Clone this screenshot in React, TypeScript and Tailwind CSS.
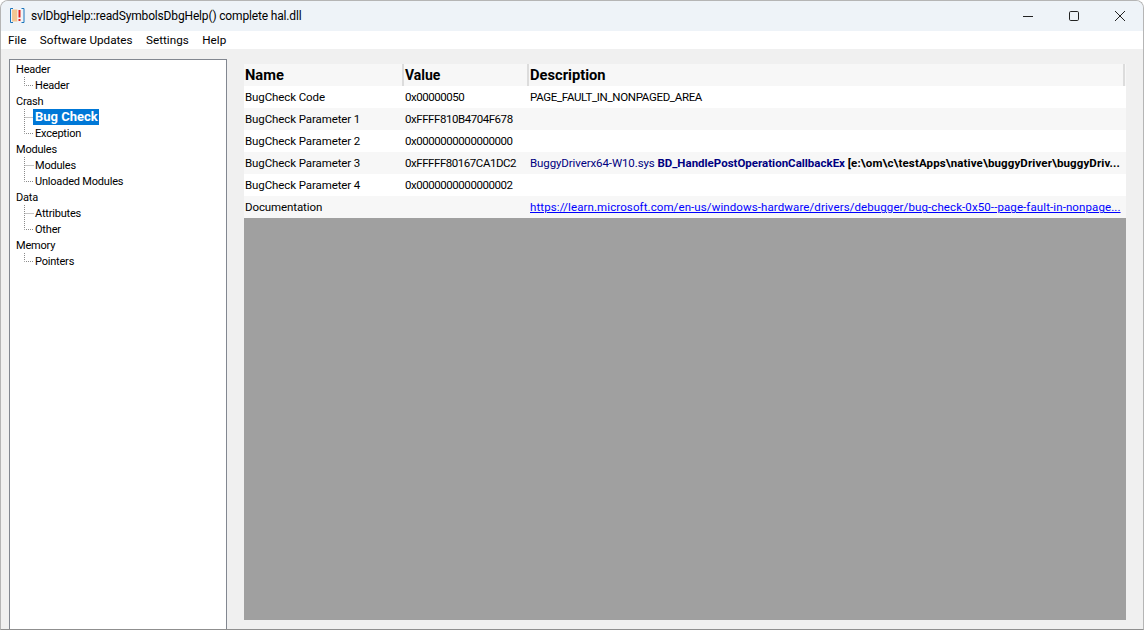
import { ReactNode } from 'react'

const tree = [
  { label: 'Header', children: ['Header'] },
  { label: 'Crash', children: ['Bug Check', 'Exception'] },
  { label: 'Modules', children: ['Modules', 'Unloaded Modules'] },
  { label: 'Data', children: ['Attributes', 'Other'] },
  { label: 'Memory', children: ['Pointers'] },
]

const rows: { name: string; value: string; desc?: ReactNode }[] = [
  { name: 'BugCheck Code', value: '0x00000050', desc: <span className="tracking-[-0.33px]">PAGE_FAULT_IN_NONPAGED_AREA</span> },
  { name: 'BugCheck Parameter 1', value: '0xFFFF810B4704F678' },
  { name: 'BugCheck Parameter 2', value: '0x0000000000000000' },
  {
    name: 'BugCheck Parameter 3',
    value: '0xFFFFF80167CA1DC2',
    desc: (
      <>
        <span className="text-[#000080] tracking-[-0.1px]">BuggyDriverx64-W10.sys </span>
        <b className="text-[#000080]">BD_HandlePostOperationCallbackEx </b>
        <b className="tracking-[0.12px]">[e:\om\c\testApps\native\buggyDriver\buggyDriv...</b>
      </>
    ),
  },
  { name: 'BugCheck Parameter 4', value: '0x0000000000000002' },
  {
    name: 'Documentation',
    value: '',
    desc: (
      <span className="text-[#0000ff] underline tracking-[0.1px]">
        https://learn.microsoft.com/en-us/windows-hardware/drivers/debugger/bug-check-0x50--page-fault-in-nonpage...
      </span>
    ),
  },
]

function AppIcon() {
  return (
    <svg width="18" height="18" viewBox="0 0 18 18" className="shrink-0">
      <path d="M2.5 1.5V15.5M2.5 1.5H5M2.5 15.5H5" stroke="#1b75bc" strokeWidth="1" fill="none" />
      <rect x="4" y="2.5" width="5.5" height="12" fill="#f2c592" />
      <rect x="9.5" y="2.5" width="4.5" height="12" fill="#f4f4f4" />
      <rect x="10.5" y="3" width="2" height="7.5" fill="#e02020" />
      <rect x="10.5" y="12" width="2" height="2" fill="#e02020" />
      <path d="M16 1.5V15.5M13.5 1.5H16M13.5 15.5H16" stroke="#1b75bc" strokeWidth="1" fill="none" />
    </svg>
  )
}

function Connector({ last }: { last: boolean }) {
  return (
    <svg width="10" height="16" viewBox="0 0 10 16" className="shrink-0">
      <path
        d={last ? 'M.5 0V8.5H10' : 'M.5 0V16M.5 8.5H10'}
        stroke="#8a8a8a"
        strokeWidth="1"
        strokeDasharray="1 1"
        fill="none"
      />
    </svg>
  )
}

export default function App() {
  return (
    <div className="w-[1144px] h-[630px] flex flex-col overflow-hidden rounded-t-lg border border-b-[#8f8f8f] border-x-[#b5b5b5] border-t-[#b5b5b5] bg-[#f0f0f0] text-[11.5px] text-black font-['Roboto','Noto_Sans',sans-serif]">
      {/* title bar */}
      <div className="h-[30px] shrink-0 flex items-center bg-[#eef3f8] pl-[7px]">
        <AppIcon />
        <span className="ml-[5px] text-[12px] tracking-[-0.16px]">svlDbgHelp::readSymbolsDbgHelp() complete hal.dll</span>
        <div className="ml-auto flex items-center text-[#222]">
          <div className="w-[46px] h-[30px] flex items-center justify-center">
            <svg width="12" height="12" viewBox="0 0 12 12"><path d="M1 6.5H11" stroke="#222" fill="none" /></svg>
          </div>
          <div className="w-[46px] h-[30px] flex items-center justify-center">
            <svg width="12" height="12" viewBox="0 0 12 12"><rect x="1.5" y="1.5" width="9" height="9" rx="1.2" stroke="#222" fill="none" /></svg>
          </div>
          <div className="w-[46px] h-[30px] flex items-center justify-center">
            <svg width="12" height="12" viewBox="0 0 12 12"><path d="M1 1L11 11M11 1L1 11" stroke="#222" fill="none" /></svg>
          </div>
        </div>
      </div>

      {/* menu */}
      <div className="h-[18px] shrink-0 flex items-center bg-white pl-[7px] pt-[2px] gap-[13.5px] text-[11.7px]">
        <span>File</span>
        <span>Software Updates</span>
        <span>Settings</span>
        <span>Help</span>
      </div>

      {/* body */}
      <div className="flex-1 min-h-0 flex pt-[10px] pl-[8px]">
        <div className="w-[218px] border border-[#828790] border-b-0 bg-white pt-[1px] pl-[6px] leading-[18px] text-[11px] tracking-[-0.2px]">
          {tree.map(group => (
            <div key={group.label}>
              <div className="h-4">{group.label}</div>
              {group.children.map((child, i) => (
                <div key={child} className="h-4 flex pl-[8px]">
                  <Connector last={i === group.children.length - 1} />
                  {child === 'Bug Check' ? (
                    <span className="h-4 leading-4 bg-[#0078d7] text-white font-bold pl-[2px] pr-[1px] -ml-[1px] text-[13px] tracking-normal">{child}</span>
                  ) : (
                    <span className="pl-[1px]">{child}</span>
                  )}
                </div>
              ))}
            </div>
          ))}
        </div>

        <div className="flex-1 min-w-0 flex flex-col pt-[5px] pl-[17px] pr-[17px] pb-[9px]">
          <div className="h-[22px] shrink-0 flex items-center bg-[#f7f7f7] font-bold text-[14.7px]">
            <div className="w-[158px] pl-[1px]">Name</div>
            <div className="w-[125px] h-[22px] pl-[1px] border-l-2 border-[#dcdcdc] leading-[22px] text-[14px]">Value</div>
            <div className="flex-1 h-[22px] pl-[1px] border-l-2 border-[#dcdcdc] leading-[22px]">Description</div>
            <div className="w-[2px] h-[22px] mr-[1px] bg-[#dcdcdc]" />
          </div>
          {rows.map((row, i) => (
            <div key={row.name} className={`h-[22px] shrink-0 flex items-center pt-[2px] ${i % 2 ? 'bg-[#f7f7f7]' : 'bg-white'}`}>
              <div className="w-[160px] pl-[1px] whitespace-nowrap tracking-[-0.1px]">{row.name}</div>
              <div className="w-[125px] pl-[1px] whitespace-nowrap tracking-[-0.45px]">{row.value}</div>
              <div className="flex-1 min-w-0 pl-[1px] whitespace-nowrap">{row.desc}</div>
            </div>
          ))}
          <div className="flex-1 bg-[#a0a0a0]" />
        </div>
      </div>
    </div>
  )
}
